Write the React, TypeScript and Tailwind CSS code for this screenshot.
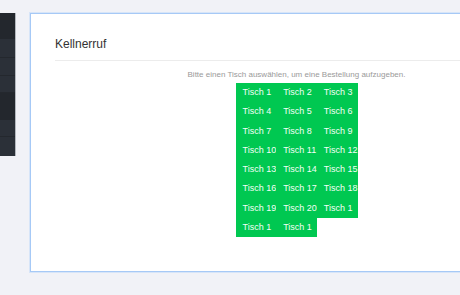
const TABLES = [
  "Tisch 1", "Tisch 2", "Tisch 3",
  "Tisch 4", "Tisch 5", "Tisch 6",
  "Tisch 7", "Tisch 8", "Tisch 9",
  "Tisch 10", "Tisch 11", "Tisch 12",
  "Tisch 13", "Tisch 14", "Tisch 15",
  "Tisch 16", "Tisch 17", "Tisch 18",
  "Tisch 19", "Tisch 20", "Tisch 1",
  "Tisch 1", "Tisch 1",
];

// sidebar strip, only the right edge is on screen
const NAV_ROWS = [
  { h: "h-[26px]", dark: true },
  { h: "h-[19px]" },
  { h: "h-[18px]" },
  { h: "h-[17px]" },
  { h: "h-[27px]", dark: true },
  { h: "h-[17px]" },
  { h: "h-[19px]", last: true },
];

function SideStrip() {
  return (
    <div className="mt-[13px] w-[16px] shrink-0 self-start border-r border-[#b4b8be] flex flex-col">
      {NAV_ROWS.map((r, i) => (
        <div
          key={i}
          className={
            r.dark
              ? `${r.h} bg-[#23272d]`
              : r.last
              ? `${r.h} bg-[#2b3038]`
              : `${r.h} bg-[#2b3038] border-b border-[#24282e]`
          }
        />
      ))}
    </div>
  );
}

export default function App() {
  return (
    <div
      className="w-[460px] h-[295px] overflow-hidden bg-[#f1f2f7] flex"
      style={{ fontFamily: '"Liberation Sans", Arial, sans-serif' }}
    >
      <SideStrip />
      <div className="ml-[14px] mt-[13px] h-[259px] w-[533px] shrink-0 bg-white border border-[#a6c9f6] shadow-[0_0_0_1px_rgba(190,215,250,0.5)] px-[24px] pt-[23px]">
        <h2 className="text-[12px] leading-[14px] text-[#333]">Kellnerruf</h2>
        <div className="mt-[9px] h-px bg-[#ececec]" />
        <p className="mt-[9px] text-center text-[8px] leading-[10px] text-[#9a9a9a]">
          Bitte einen Tisch auswählen, um eine Bestellung aufzugeben.
        </p>
        <div className="mx-auto mt-[3px] w-[122px] grid grid-cols-3 auto-rows-[19.25px]">
          {TABLES.map((t, i) => (
            <button
              key={i}
              className="bg-[#00c851] text-[#f4fff6] text-[9px] leading-none text-left pl-[7px] whitespace-nowrap overflow-visible cursor-pointer"
            >
              {t}
            </button>
          ))}
        </div>
      </div>
    </div>
  );
}
